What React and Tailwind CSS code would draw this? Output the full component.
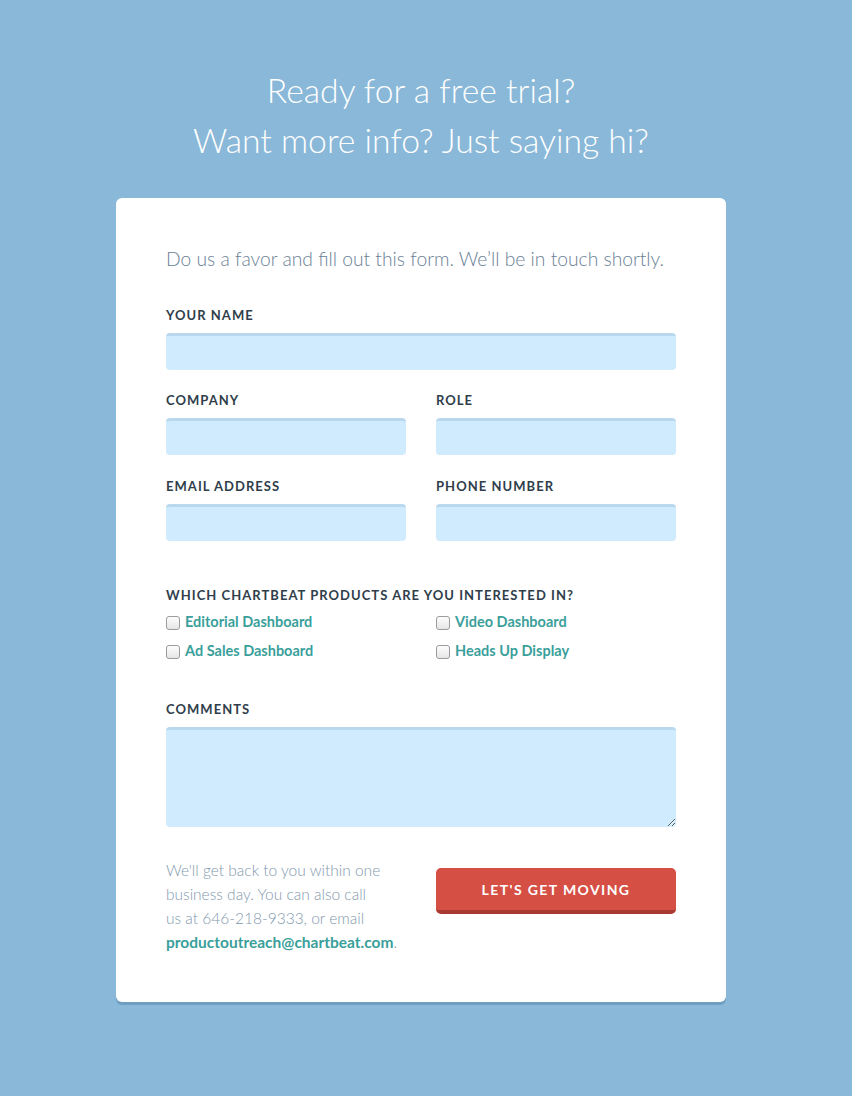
import React from 'react';

const labelBase =
  'block text-[13px] font-bold tracking-[0.08em] text-[#2f3e4a] uppercase leading-4';
const labelCls = labelBase + ' mb-[10px]';
const inputCls =
  'block w-full h-[37px] rounded-[4px] bg-[#d0ebfd] border-t-[3px] border-[#b9d8ee] outline-none';

function Field({ label, className = '' }) {
  return (
    <div className={className}>
      <label className={labelCls}>{label}</label>
      <input type="text" className={inputCls} />
    </div>
  );
}

function Check({ label }) {
  return (
    <label className="flex items-center gap-[5px] h-[29px]">
      <input
        type="checkbox"
        className="appearance-none w-[14px] h-[14px] mt-[3px] rounded-[3px] border border-[#9b9b9b] bg-gradient-to-b from-[#fdfdfd] to-[#e6e6e6]"
      />
      <span className="text-[14.5px] font-bold text-[#3a9f9b]">{label}</span>
    </label>
  );
}

export default function App() {
  return (
    <div
      className="min-h-[1096px] bg-[#8ab8d8] pt-[65px] pb-[96px] pr-[10px]"
      style={{ fontFamily: 'Lato, "Open Sans", sans-serif' }}
    >
      <h1 className="text-center text-white text-[33.7px] font-light leading-[50px]">
        Ready for a free trial?
        <br />
        Want more info? Just saying hi?
      </h1>

      <div className="mx-auto mt-[33px] w-[610px] bg-white rounded-[6px] shadow-[0_3px_0_rgba(60,110,150,0.35)] px-[50px] pt-[47px] pb-[48px]">
        <p className="text-[19.25px] font-light text-[#6a8196] leading-7">
          Do us a favor and fill out this form. We’ll be in touch shortly.
        </p>

        <Field label="Your Name" className="mt-[34px]" />

        <div className="grid grid-cols-2 gap-x-[30px] mt-[22px]">
          <Field label="Company" />
          <Field label="Role" />
        </div>

        <div className="grid grid-cols-2 gap-x-[30px] mt-[23px]">
          <Field label="Email Address" />
          <Field label="Phone Number" />
        </div>

        <div className="mt-[46px]">
          <label className={labelBase + ' mb-[4px]'}>
            Which Chartbeat products are you interested in?
          </label>
          <div className="grid grid-cols-2 gap-x-[30px]">
            <Check label="Editorial Dashboard" />
            <Check label="Video Dashboard" />
            <Check label="Ad Sales Dashboard" />
            <Check label="Heads Up Display" />
          </div>
        </div>

        <div className="mt-[36px]">
          <label className={labelCls}>Comments</label>
          <textarea className="block w-full h-[100px] rounded-[4px] bg-[#d0ebfd] border-t-[3px] border-[#b9d8ee] outline-none resize-y" />
        </div>

        <div className="grid grid-cols-2 gap-x-[30px] mt-[31px]">
          <p className="text-[15.5px] font-light text-[#8299ad] leading-6 pr-[22px]">
            We'll get back to you within one business day. You can also call us at 646-218-9333, or
            email{' '}
            <a className="font-bold text-[#3a9f9b]">productoutreach@chartbeat.com</a>.
          </p>
          <div>
            <button className="w-full h-[46px] mt-[10px] rounded-[5px] bg-[#d64f45] border-b-4 border-[#a93a32] text-white text-[14px] font-bold tracking-[0.1em]">
              LET'S GET MOVING
            </button>
          </div>
        </div>
      </div>
    </div>
  );
}
